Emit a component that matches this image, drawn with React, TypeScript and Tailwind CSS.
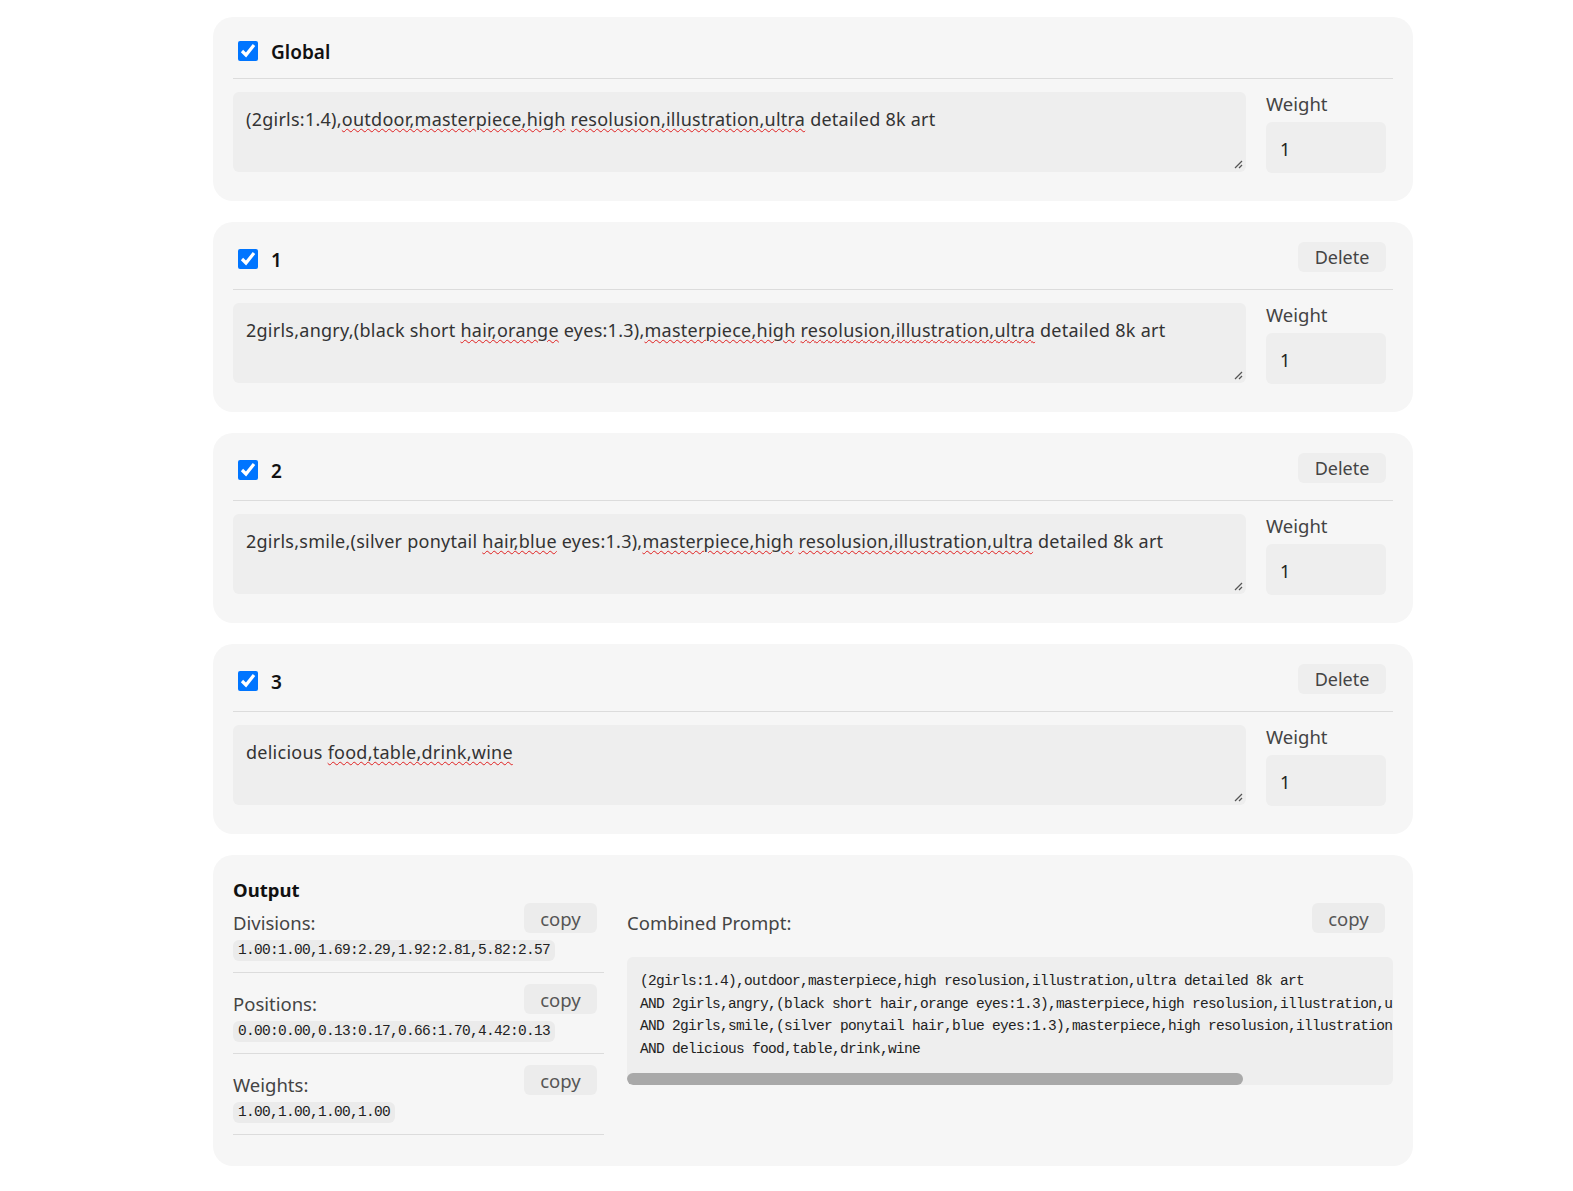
import React from "react";

type Seg = [string, boolean];

const cards: { title: string; del: boolean; segs: Seg[] }[] = [
  {
    title: "Global",
    del: false,
    segs: [
      ["(2girls:1.4),", false],
      ["outdoor,masterpiece,high", true],
      [" ", false],
      ["resolusion,illustration,ultra", true],
      [" detailed 8k art", false],
    ],
  },
  {
    title: "1",
    del: true,
    segs: [
      ["2girls,angry,(black short ", false],
      ["hair,orange", true],
      [" eyes:1.3),", false],
      ["masterpiece,high", true],
      [" ", false],
      ["resolusion,illustration,ultra", true],
      [" detailed 8k art", false],
    ],
  },
  {
    title: "2",
    del: true,
    segs: [
      ["2girls,smile,(silver ponytail ", false],
      ["hair,blue", true],
      [" eyes:1.3),", false],
      ["masterpiece,high", true],
      [" ", false],
      ["resolusion,illustration,ultra", true],
      [" detailed 8k art", false],
    ],
  },
  {
    title: "3",
    del: true,
    segs: [
      ["delicious ", false],
      ["food,table,drink,wine", true],
    ],
  },
];

const sans = { fontFamily: "'Noto Sans', 'Open Sans', sans-serif" };

function Grip() {
  return (
    <svg className="absolute right-[3px] bottom-[3px]" width="9" height="9" viewBox="0 0 9 9">
      <line x1="1" y1="8" x2="8" y2="1" stroke="#555" strokeWidth="1.2" />
      <line x1="5" y1="8" x2="8" y2="5" stroke="#555" strokeWidth="1.2" />
    </svg>
  );
}

function PromptCard({ title, del, segs }: { title: string; del: boolean; segs: Seg[] }) {
  return (
    <div className="w-[1200px] rounded-[20px] bg-[#f6f6f6] px-5 pt-5 pb-[28px]">
      <div className="flex items-start justify-between border-b border-[#dcdcdc] pb-[13px] pr-[7px]">
        <div className={`flex items-center gap-[13px] ${del ? "h-[34px]" : "h-[28px]"}`}>
          <input type="checkbox" defaultChecked className="ml-[5px] h-5 w-5 accent-[#0075ff]" />
          <span className="pt-[1px] text-[19px] leading-[28px] font-semibold text-[#111]">{title}</span>
        </div>
        {del && (
          <button className="h-[30px] w-[88px] rounded-md bg-[#eeeeee] text-[18px] leading-[30px] text-[#444]">Delete</button>
        )}
      </div>
      <div className="mt-[13px] flex gap-5">
        <div className="relative h-[80px] flex-1 rounded-md bg-[#eeeeee] px-[13px] pt-[14px] text-[18px] leading-[27px] tracking-[0.25px] text-[#333]">
          {segs.map(([t, u], i) =>
            u ? (
              <span key={i} className="underline decoration-wavy decoration-[#e02020] decoration-1 underline-offset-[2px]">
                {t}
              </span>
            ) : (
              <span key={i} className="whitespace-pre">{t}</span>
            )
          )}
          <Grip />
        </div>
        <div className="w-[127px]">
          <div className="h-[30px] text-[18.5px] leading-[24px] text-[#444]">Weight</div>
          <div className="h-[51px] w-[120px] rounded-md bg-[#eeeeee] px-[14px] pt-[3px] text-[18px] leading-[48px] text-[#222]">1</div>
        </div>
      </div>
    </div>
  );
}

function CopyBtn() {
  return (
    <button className="h-[30px] w-[73px] shrink-0 rounded-md bg-[#ececec] text-[18.5px] leading-[29px] text-[#555]">copy</button>
  );
}

const mono = { fontFamily: "'Liberation Mono', 'DejaVu Sans Mono', monospace" };

function Section({ label, value, first }: { label: string; value: string; first?: boolean }) {
  return (
    <div className={`border-b border-[#dcdcdc] pb-[11px] ${first ? "" : "pt-[11px]"}`}>
      <div className="flex h-[30px] items-start justify-between pr-[7px]">
        <span className="pt-[7px] text-[18.5px] leading-[26px] text-[#444]">{label}</span>
        <CopyBtn />
      </div>
      <div className="mt-[7px] inline-block h-[21px] rounded-md bg-[#ebebeb] px-[5px] text-[14.5px] leading-[21px] tracking-[-0.7px] text-[#222]" style={mono}>
        {value}
      </div>
    </div>
  );
}

const combined = [
  "(2girls:1.4),outdoor,masterpiece,high resolusion,illustration,ultra detailed 8k art",
  "AND 2girls,angry,(black short hair,orange eyes:1.3),masterpiece,high resolusion,illustration,ultra detailed 8k art",
  "AND 2girls,smile,(silver ponytail hair,blue eyes:1.3),masterpiece,high resolusion,illustration,ultra detailed 8k art",
  "AND delicious food,table,drink,wine",
];

export default function App() {
  return (
    <div className="min-h-screen bg-white pl-[213px] pt-[17px] pb-10" style={sans}>
      <div className="flex flex-col gap-[21px]">
        {cards.map((c) => (
          <PromptCard key={c.title} {...c} />
        ))}
        <div className="w-[1200px] rounded-[20px] bg-[#f6f6f6] px-5 pt-5 pb-[31px]">
          <div className="flex gap-[23px]">
            <div className="w-[371px]">
              <div className="pt-[1px] text-[18.5px] font-bold leading-[27px] text-[#111]">Output</div>
              <Section first label="Divisions:" value="1.00:1.00,1.69:2.29,1.92:2.81,5.82:2.57" />
              <Section label="Positions:" value="0.00:0.00,0.13:0.17,0.66:1.70,4.42:0.13" />
              <Section label="Weights:" value="1.00,1.00,1.00,1.00" />
            </div>
            <div className="min-w-0 flex-1 pt-[28px]">
              <div className="flex h-[30px] items-start justify-between pr-[8px]">
                <span className="pt-[7px] text-[18.5px] leading-[26px] text-[#444]">Combined Prompt:</span>
                <CopyBtn />
              </div>
              <div className="mt-[24px] overflow-hidden rounded-md bg-[#eeeeee]">
                <div className="overflow-hidden px-[13px] pt-[13px] pb-[13px] text-[14.5px] leading-[22.5px] tracking-[-0.7px] text-[#222]" style={mono}>
                  {combined.map((l, i) => (
                    <div key={i} className="whitespace-pre">{l}</div>
                  ))}
                </div>
                <div className="h-3">
                  <div className="h-3 w-[616px] rounded-full bg-[#a9a9a9]" />
                </div>
              </div>
            </div>
          </div>
        </div>
      </div>
    </div>
  );
}
